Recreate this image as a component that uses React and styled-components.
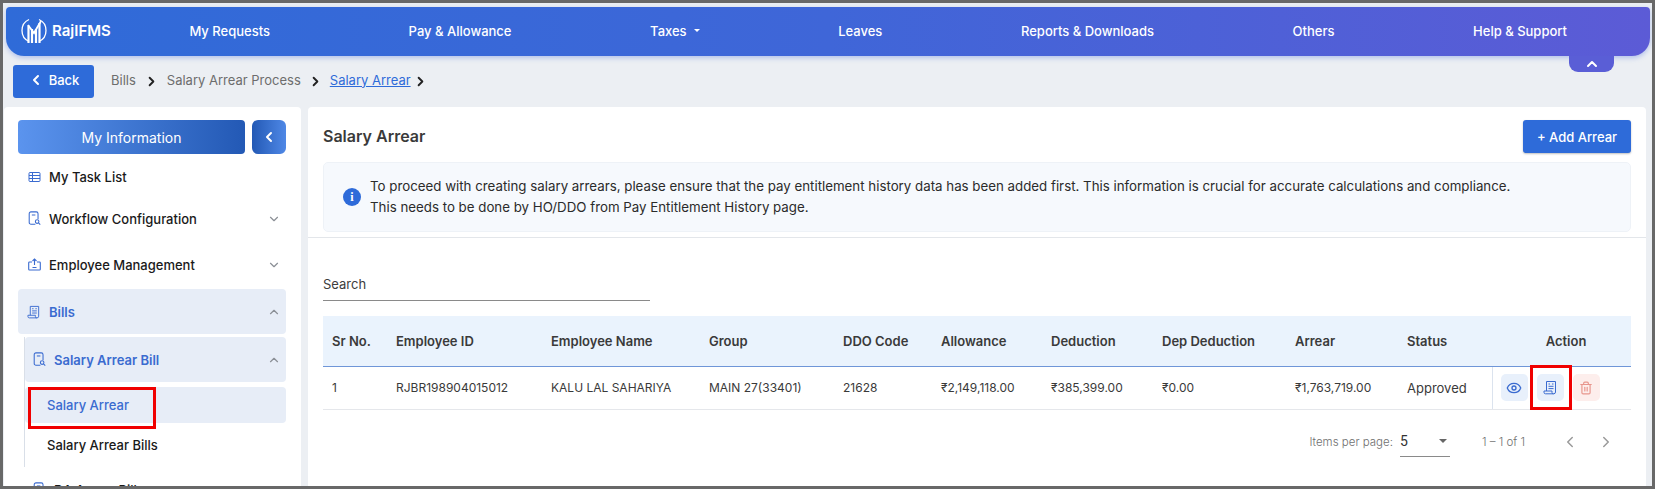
import styled, { createGlobalStyle } from "styled-components";
import { ChevronDown, ChevronLeft, ChevronRight, ChevronUp, Eye, Trash2 } from "lucide-react";

const GlobalStyle = createGlobalStyle`
  * { box-sizing: border-box; }
  html, body { margin: 0; padding: 0; background: #eceff3; }
  body { font-family: Inter, "Liberation Sans", sans-serif; color: #222; }
`;

const Frame = styled.div`
  position: relative;
  width: 1655px;
  height: 489px;
  border: 3px solid #686868;
  background: #eceff3;
  overflow: hidden;
  display: flex;
  flex-direction: column;
`;
const NavBar = styled.nav`
  flex: none;
  height: 49px;
  margin: 4px 2px 0 3px;
  padding: 0 83px 2px 15px;
  display: flex;
  align-items: center;
  justify-content: space-between;
  color: #fff;
  border-radius: 4px 4px 18px 18px;
  background: linear-gradient(90deg, #2f6bd8 0%, #3f66d8 50%, #5c5bd6 100%);
  box-shadow: 0 2px 5px rgba(70, 110, 220, 0.35);
`;
const Brand = styled.div`
  display: flex;
  align-items: center;
  gap: 5px;
  margin-right: -60px;
  font-size: 15px;
  font-weight: 600;
`;
const NavItem = styled.span`
  font-size: 13px;
  font-weight: 500;
  display: inline-flex;
  align-items: center;
  gap: 7px;
  white-space: nowrap;
`;
const Caret = styled.i`
  width: 0;
  height: 0;
  border-left: 3px solid transparent;
  border-right: 3px solid transparent;
  border-top: 3px solid #fff;
`;
const CollapseTab = styled.div`
  position: absolute;
  top: 53px;
  left: 1566px;
  width: 45px;
  height: 16px;
  display: flex;
  align-items: center;
  justify-content: center;
  color: #fff;
  background: #5a5ed6;
  border-radius: 0 0 9px 9px;
`;
const CrumbRow = styled.div`
  flex: none;
  height: 33px;
  margin: 9px 0 9px 10px;
  display: flex;
  align-items: center;
`;
const BackButton = styled.button`
  width: 81px;
  height: 33px;
  margin-right: 17px;
  padding: 0 0 3px;
  border: 0;
  border-radius: 3px;
  color: #fff;
  background: #2e6bd9;
  font: 500 13px Inter, sans-serif;
  display: flex;
  align-items: center;
  justify-content: center;
  gap: 5px;
`;
const Crumb = styled.span`
  font-size: 13px;
  margin-top: -4px;
  color: ${(p) => (p.$active ? "#2e6bd9" : "#6d6d6d")};
  text-decoration: ${(p) => (p.$active ? "underline" : "none")};
`;
const CrumbSep = styled(ChevronRight)`
  margin: 0 ${(p) => p.$gap}px;
  color: #222;
`;
const Body = styled.div`
  flex: 1;
  min-height: 0;
  display: flex;
  gap: 7px;
  margin-right: 6px;
  margin-left: 1px;
`;
const Sidebar = styled.aside`
  flex: none;
  width: 297px;
  padding: 13px 15px 0 14px;
  background: #fff;
  border-radius: 4px 4px 0 0;
  overflow: hidden;
`;
const SideTop = styled.div`
  display: flex;
  gap: 7px;
  margin-bottom: 7px;
`;
const InfoButton = styled.div`
  width: 227px;
  height: 34px;
  border-radius: 4px;
  color: #fff;
  font-size: 14px;
  display: flex;
  align-items: center;
  justify-content: center;
  background: linear-gradient(90deg, #5b94ee, #2359b5);
`;
const SideToggle = styled.div`
  width: 34px;
  height: 34px;
  border-radius: 6px;
  color: #fff;
  display: flex;
  align-items: center;
  justify-content: center;
  background: linear-gradient(90deg, #2359b5, #4f88e6);
`;
const MenuRow = styled.div`
  height: ${(p) => p.$h || 45}px;
  margin: ${(p) => p.$m || "0"};
  padding: 0 5px 0 ${(p) => p.$pad || 10}px;
  display: flex;
  align-items: center;
  gap: 8px;
  border-radius: 4px;
  font-size: 13px;
  font-weight: ${(p) => p.$weight || 500};
  color: ${(p) => (p.$active ? "#3a6bd0" : "#1a1a1a")};
  background: ${(p) => (p.$active ? "#e7edf7" : "transparent")};
  svg.caret { margin-left: auto; color: #8b8f96; }
`;
const SubMenu = styled.div`
  margin-left: 6px;
  border-left: 1px solid #d9dfe8;
`;
const Highlight = styled.div`
  position: absolute;
  pointer-events: none;
  border: 3px solid #f00000;
  left: ${(p) => p.$x}px;
  top: ${(p) => p.$y}px;
  width: ${(p) => p.$w}px;
  height: ${(p) => p.$h}px;
`;
const Main = styled.main`
  flex: 1;
  background: #fff;
  border-radius: 4px 4px 0 0;
  overflow: hidden;
`;
const MainHead = styled.div`
  padding: 13px 15px 5px;
  border-bottom: 1px solid #e3e6ea;
`;
const TitleRow = styled.div`
  display: flex;
  align-items: center;
  justify-content: space-between;
  height: 33px;
  margin-bottom: 9px;
`;
const Title = styled.h2`
  margin: -2px 0 0;
  font-size: 16px;
  font-weight: 600;
  color: #3a3a3a;
`;
const AddButton = styled.button`
  width: 108px;
  height: 33px;
  border: 0;
  border-radius: 3px;
  color: #fff;
  background: #2e6bd9;
  font: 500 13px Inter, sans-serif;
  box-shadow: 0 1px 2px rgba(0, 0, 0, 0.25);
`;
const Notice = styled.div`
  height: 70px;
  padding: 0 19px;
  display: flex;
  align-items: center;
  gap: 9px;
  border: 1px solid #eef2f7;
  border-radius: 5px;
  background: #f6f9fd;
  font-size: 13.3px;
  line-height: 21px;
  color: #2b2b2b;
  white-space: nowrap;
`;
const InfoIcon = styled.span`
  flex: none;
  width: 18px;
  height: 18px;
  border-radius: 50%;
  background: #2e6bd9;
  color: #fff;
  font: 700 12px "Liberation Serif", serif;
  display: flex;
  align-items: center;
  justify-content: center;
`;
const Content = styled.div`
  padding: 33px 15px 0;
`;
const SearchBox = styled.div`
  width: 327px;
  height: 30px;
  margin-bottom: 15px;
  font-size: 13px;
  color: #3d3d3d;
  border-bottom: 1px solid #8a8a8a;
  padding-top: 5px;
`;
const Table = styled.table`
  width: 1308px;
  border-collapse: collapse;
  table-layout: fixed;
  font-size: 12px;
`;
const HeadCell = styled.th`
  height: 50px;
  padding: 0 0 0 9px;
  text-align: ${(p) => p.$align || "left"};
  font-size: 13px;
  font-weight: 600;
  color: #3a3a3a;
  background: #eaf3fd;
  border-bottom: 1px solid #6f96d8;
`;
const Cell = styled.td`
  height: 43px;
  padding: 0 0 0 9px;
  font-size: ${(p) => p.$size || 12}px;
  color: #3a3a3a;
  border-bottom: 1px solid #e5e7eb;
  white-space: nowrap;
`;
const ActionCell = styled(Cell)`
  padding: 0;
  border-left: 1px solid #dbe3ee;
`;
const Actions = styled.div`
  display: flex;
  gap: 9px;
  padding-left: 8px;
`;
const IconButton = styled.span`
  width: 27px;
  height: 27px;
  border-radius: 5px;
  display: flex;
  align-items: center;
  justify-content: center;
  color: ${(p) => (p.$danger ? "#e8958c" : "#3a6bd0")};
  background: ${(p) => (p.$danger ? "#fdeeec" : "#e8f0fb")};
`;
const Pager = styled.div`
  height: 64px;
  display: flex;
  align-items: center;
  justify-content: flex-end;
  font-size: 11.5px;
  font-weight: 300;
  color: #6f6f6f;
  padding-right: 16px;
`;
const PageSelect = styled.div`
  width: 50px;
  height: 30px;
  margin: 0 32px 0 7px;
  display: flex;
  align-items: center;
  justify-content: space-between;
  padding-right: 3px;
  border-bottom: 1px solid #8a8a8a;
  font: 400 14px Roboto, sans-serif;
  color: #333;
`;
const PageArrow = styled.i`
  width: 0;
  height: 0;
  border-left: 4px solid transparent;
  border-right: 4px solid transparent;
  border-top: 4px solid #666;
`;
const PageNav = styled.span`
  display: flex;
  gap: 18px;
  margin-left: 36px;
  color: #9a9a9a;
`;

const Logo = () => (
  <svg width="26" height="29" viewBox="0 0 26 29" fill="none" stroke="#fff">
    <path d="M8 3.500C3.500 5.500 1 9.500 1 14.500s2.500 9 7 11M18 3.500c4.500 2 7 6 7 11s-2.500 9-7 11" strokeWidth="1.300" />
    <path d="M7.500 27V9.500M11 27V13M15 27V13M18.500 27V7" strokeWidth="2.200" />
    <path d="M7 9l6 8 7-12" strokeWidth="1.800" />
  </svg>
);
const ListIcon = () => (
  <svg width="13" height="12" viewBox="0 0 13 12" fill="none" stroke="#3a6bd0">
    <rect x="1" y="1.500" width="11" height="9" rx="1" />
    <path d="M1 4.500h11M1 7.500h11M4.500 1.500v9" />
  </svg>
);
const DocSearchIcon = () => (
  <svg width="13" height="15" viewBox="0 0 14 17" fill="none" stroke="#3a6bd0" strokeWidth="1.200">
    <path d="M8 15H3a2 2 0 0 1-2-2V3a2 2 0 0 1 2-2h6a2 2 0 0 1 2 2v6" />
    <path d="M4 4.500h4" />
    <circle cx="10" cy="12" r="2" />
    <path d="M11.500 13.500l2 2" />
  </svg>
);
const BoxIcon = () => (
  <svg width="13" height="13" viewBox="0 0 13 13" fill="none" stroke="#3a6bd0" strokeWidth="1.100">
    <path d="M4 4H1.500a.8.800 0 0 0-.8.800v6.400a.8.800 0 0 0 .8.800h10a.8.800 0 0 0 .8-.8V4.800a.8.800 0 0 0-.8-.8H9" />
    <path d="M6.500 1v6M4.500 3l2-2 2 2M4.500 9.500h4" />
  </svg>
);
const BillIcon = ({ size = 15 }) => (
  <svg width={size} height={size} viewBox="0 0 15 15" fill="none" stroke="#3a6bd0" strokeWidth="1">
    <path d="M3.500 11V1.500h9V12a1.800 1.800 0 0 1-1.800 1.800H2.500A1.500 1.500 0 0 1 1 12.300V11h8v1.500a1.300 1.300 0 0 0 1.500 1.300" />
    <path d="M5.500 4h1.500M9 4h1.500M5.500 6.300h5M5.500 8.600h5" />
  </svg>
);

const columns = [
  ["Sr No.", 64], ["Employee ID", 155], ["Employee Name", 158], ["Group", 134], ["DDO Code", 98],
  ["Allowance", 110], ["Deduction", 111], ["Dep Deduction", 133], ["Arrear", 112], ["Status", 94],
];
const row = [
  "1", "RJBR198904015012", "KALU LAL SAHARIYA", "MAIN 27(33401)", "21628",
  "₹2,149,118.00", "₹385,399.00", "₹0.00", "₹1,763,719.00",
];
const navItems = ["My Requests", "Pay & Allowance", "Taxes", "Leaves", "Reports & Downloads", "Others", "Help & Support"];

const App = () => (
  <>
    <GlobalStyle />
    <Frame>
      <NavBar>
        <Brand><Logo />RajIFMS</Brand>
        {navItems.map((item) => (
          <NavItem key={item}>{item}{item === "Taxes" && <Caret />}</NavItem>
        ))}
      </NavBar>
      <CollapseTab><ChevronUp size={16} strokeWidth={3} /></CollapseTab>
      <CrumbRow>
        <BackButton><ChevronLeft size={16} strokeWidth={3} />Back</BackButton>
        <Crumb>Bills</Crumb>
        <CrumbSep size={15} strokeWidth={3} $gap={8} />
        <Crumb>Salary Arrear Process</Crumb>
        <CrumbSep size={15} strokeWidth={3} $gap={7} />
        <Crumb $active>Salary Arrear</Crumb>
        <CrumbSep size={15} strokeWidth={3} $gap={2} />
      </CrumbRow>
      <Body>
        <Sidebar>
          <SideTop>
            <InfoButton>My Information</InfoButton>
            <SideToggle><ChevronLeft size={16} strokeWidth={3} /></SideToggle>
          </SideTop>
          <MenuRow $h={32}><ListIcon />My Task List</MenuRow>
          <MenuRow $m="3px 0 0"><DocSearchIcon />Workflow Configuration<ChevronDown className="caret" size={14} /></MenuRow>
          <MenuRow $m="1px 0 0"><BoxIcon />Employee Management<ChevronDown className="caret" size={14} /></MenuRow>
          <MenuRow $active $weight={600} $m="2px 0 3px" $pad={9}><BillIcon size={14} />Bills<ChevronUp className="caret" size={14} /></MenuRow>
          <SubMenu>
            <MenuRow $active $weight={600} $pad={8}><DocSearchIcon />Salary Arrear Bill<ChevronUp className="caret" size={14} /></MenuRow>
            <MenuRow $active $h={36} $m="5px 0 0" $pad={22}>Salary Arrear</MenuRow>
            <MenuRow $h={44} $pad={22}>Salary Arrear Bills</MenuRow>
          </SubMenu>
          <MenuRow $m="0" $pad={15}><DocSearchIcon />DA Arrear Bill</MenuRow>
        </Sidebar>
        <Main>
          <MainHead>
            <TitleRow>
              <Title>Salary Arrear</Title>
              <AddButton>+ Add Arrear</AddButton>
            </TitleRow>
            <Notice>
              <InfoIcon>i</InfoIcon>
              <div>
                To proceed with creating salary arrears, please ensure that the pay entitlement history data has been added first. This information is crucial for accurate calculations and compliance.
                <br />
                This needs to be done by HO/DDO from Pay Entitlement History page.
              </div>
            </Notice>
          </MainHead>
          <Content>
            <SearchBox>Search</SearchBox>
            <Table>
              <colgroup>
                {columns.map(([name, width]) => <col key={name} width={width} />)}
                <col width={139} />
              </colgroup>
              <thead>
                <tr>
                  {columns.map(([name]) => <HeadCell key={name}>{name}</HeadCell>)}
                  <HeadCell $align="center">Action</HeadCell>
                </tr>
              </thead>
              <tbody>
                <tr>
                  {row.map((value) => <Cell key={value}>{value}</Cell>)}
                  <Cell $size={13}>Approved</Cell>
                  <ActionCell>
                    <Actions>
                      <IconButton><Eye size={16} /></IconButton>
                      <IconButton><BillIcon size={15} /></IconButton>
                      <IconButton $danger><Trash2 size={14} /></IconButton>
                    </Actions>
                  </ActionCell>
                </tr>
              </tbody>
            </Table>
            <Pager>
              Items per page:
              <PageSelect>5<PageArrow /></PageSelect>
              1 – 1 of 1
              <PageNav><ChevronLeft size={18} /><ChevronRight size={18} /></PageNav>
            </Pager>
          </Content>
        </Main>
      </Body>
      <Highlight $x={25} $y={384} $w={128} $h={42} />
      <Highlight $x={1527} $y={362} $w={42} $h={45} />
    </Frame>
  </>
);

export default App;
